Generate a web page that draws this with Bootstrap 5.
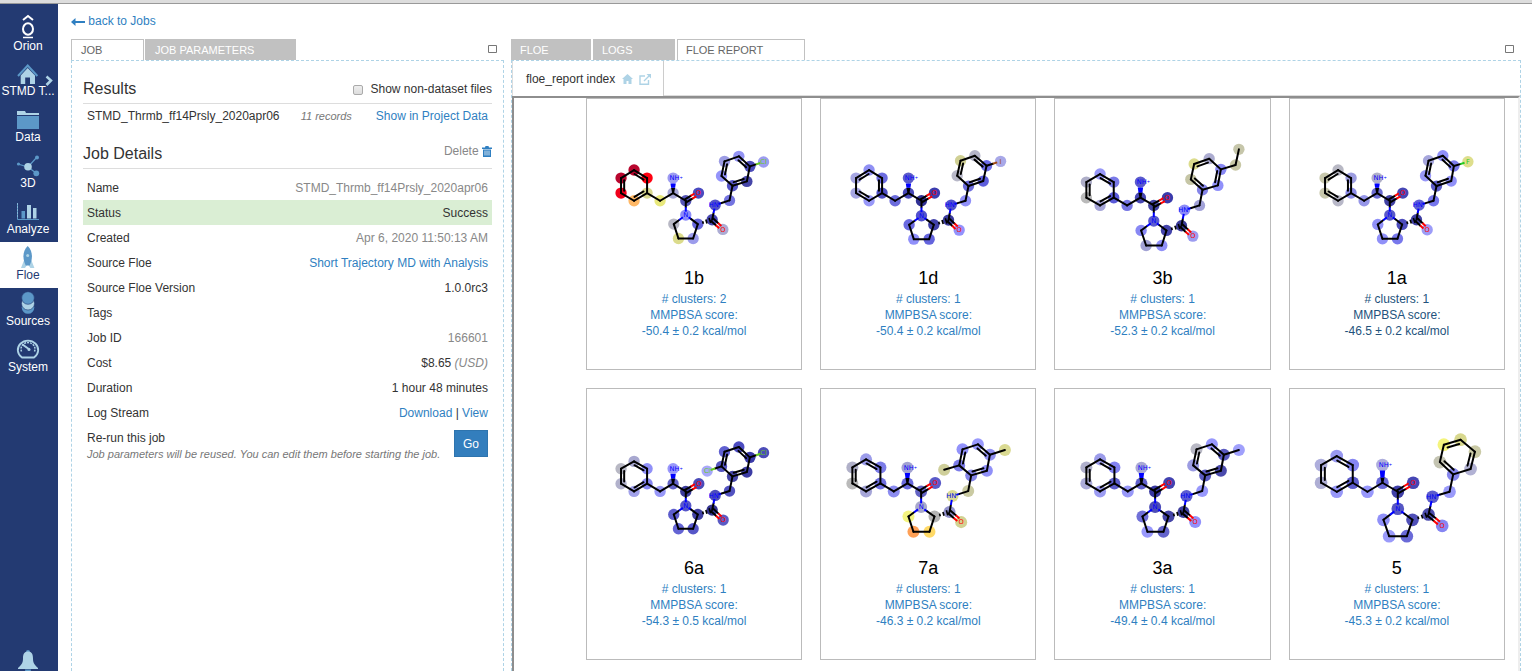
<!DOCTYPE html>
<html lang="en">
<head>
<meta charset="utf-8">
<meta name="viewport" content="width=device-width, initial-scale=1">
<title>Orion – Floe job</title>
<link href="https://cdn.jsdelivr.net/npm/bootstrap@5.3.0/dist/css/bootstrap.min.css" rel="stylesheet">
<style>
  :root { --navy:#233a72; --sky:#aed3e6; --steel:#5c98c8; --azure:#2f7fc1; --tab:#c1c1c1; }
  body { font-family:"Liberation Sans",Arial,sans-serif; font-size:12px; line-height:16px; color:#333; background:#fff; }
  a { color:var(--azure); text-decoration:none; }
  .window-edge { height:4px; background:#ddd; border-bottom:1px solid #999; }
  .side { width:58px; background:var(--navy); }
  .side a { display:block; height:46px; padding-top:2px; color:#fff; text-align:center; line-height:14px; white-space:nowrap; }
  .side a.brand { height:54px; padding-top:11px; }
  .side a.current { background:#fff; color:var(--navy); }
  .side a.alerts { height:21px; padding:0; }
  .side svg { display:block; width:58px; height:24px; overflow:visible; }
  .side span { display:block; padding-right:2px; }
  .workspace { padding:0 11px 0 13px; }
  .backlink { height:35px; padding-top:9px; }
  .panes { gap:7px; }
  .pane-job { flex:3 1 0; }
  .pane-report { flex:7 1 0; }
  .tabs { height:21px; gap:2px; }
  .pane-job .tabs { gap:1px; }
  .tabs button { border:1px solid var(--tab); border-bottom:0; background:var(--tab); color:#fff; font-size:11px; line-height:19px; padding:0 9px; text-align:left; }
  .pane-report .tabs button { padding:0 8px; }
  .tabs button.on { background:#fff; color:#666; }
  .tabs .maxi, .pane-report .tabs .maxi { border:0; background:none; padding:0; width:9px; height:9px; margin-right:7px; line-height:0; }
  .w-job { width:73px; } .w-param { width:151px; } .w-floe { width:80px; } .w-logs { width:82px; } .w-report { width:128px; }
  .frame { border:1px dashed var(--sky); border-bottom:0; }
  .frame-job { padding:14px 11px 0; }
  h2 { font-size:16px; line-height:28px; font-weight:400; margin:0; color:#333; }
  .rule { border-bottom:1px solid #ddd; }
  .showfiles { color:#333; }
  .showfiles input { appearance:none; width:10px; height:10px; border:1px solid #aaa; border-radius:2px; background:linear-gradient(#eee,#ddd); margin:2px 8px 0 0; }
  .dim { color:#888; }
  .remove { padding-top:3px; }
  .facts { width:100%; margin-top:6px; }
  .facts th { font-weight:400; padding:0 4px; height:25px; }
  .facts td { text-align:right; padding:0 4px; height:25px; }
  .facts .ok { background:#daeed4; }
  .rerun { padding:5px 4px 0; }
  .note { color:#777; font-size:11px; font-style:italic; }
  .btn-go { --bs-btn-color:#fff; --bs-btn-bg:#337ebd; --bs-btn-border-color:#2e74ae; --bs-btn-hover-color:#fff; --bs-btn-hover-bg:#2a6ca5; width:34px; height:27px; padding:0; font-size:12px; border-radius:0; }
  .subtabs { height:35px; }
  .subtab { width:152px; padding:0 12px 0 13px; border-left:1px solid #ddd; border-right:1px solid #ccc; }
  .subrest { border-bottom:1px solid #ddd; }
  .report { border-left:2px solid #8e8e8e; border-top:2px solid #8e8e8e; border-right:2px solid #eee; padding:0 13px 0 72px; }
  .mols { display:grid; grid-template-columns:repeat(4,1fr); gap:18px; }
  .mol { display:block; height:272px; border:1px solid #bbb; padding-top:36px; text-align:center; color:var(--azure); }
  .mol:hover, .mol.hot { color:#23527c; }
  .mol svg { display:block; width:100%; aspect-ratio:214/120; margin-bottom:12px; }
  .mol h3 { font-size:18px; line-height:22px; margin:0 0 2px; color:#000; font-weight:400; }
  .mol svg text { font-family:"DejaVu Sans",sans-serif; text-anchor:middle; }
</style>
</head>
<body>
<div class="vh-100 d-flex flex-column overflow-hidden">
  <div class="window-edge flex-shrink-0"></div>
  <div class="d-flex flex-grow-1" style="min-height:0">
    <nav class="side d-flex flex-column flex-shrink-0" aria-label="Main">
      <a class="brand" href="#"><svg viewBox="0 0 58 24" fill="none" stroke="#fff" stroke-width="2"><path d="M23 5l5-4 5 4" /><ellipse cx="28" cy="14" rx="5" ry="5.7"/><path d="M23 22.500h10" stroke-width="1.500"/></svg><span>Orion</span></a>
      <a href="#"><svg viewBox="0 0 58 24"><path d="M18 16L27.700 5.500 37.400 16" fill="none" stroke="#5c98c8" stroke-width="2"/><path d="M20.700 15.500L27.700 8l7.300 7.500V24h-5v-6.500h-4.800V24h-4.500z" fill="#aed3e6"/><path d="M46.500 16.500l4.500 4-4.500 4.500" fill="none" stroke="#aed3e6" stroke-width="2.500"/></svg><span>STMD T...</span></a>
      <a href="#"><svg viewBox="0 0 58 24"><path d="M17 5h8l1 2h13v2H17z" fill="#aed3e6"/><path d="M17 10h22v13H17z" fill="#5c98c8"/></svg><span>Data</span></a>
      <a href="#"><svg viewBox="0 0 58 24"><path d="M18 12l10 3 9-10M28 15l8 6" stroke="#5c98c8" stroke-width="1.200" fill="none"/><g fill="#5c98c8"><circle cx="18.500" cy="12" r="1.600"/><circle cx="37" cy="5.500" r="2"/><circle cx="36.300" cy="21.300" r="2.900"/></g><circle cx="28" cy="14.700" r="3.800" fill="#aed3e6"/></svg><span>3D</span></a>
      <a href="#"><svg viewBox="0 0 58 24"><path d="M17.500 5v16.500H39" fill="none" stroke="#5c98c8"/><path d="M17 6h1m-1 3h1m-1 3h1m-1 3h1m-1 3h1" stroke="#aed3e6"/><path d="M21.500 13H25v7.500h-3.500z" fill="#5c98c8"/><path d="M27 7h4v13.500h-4z" fill="#aed3e6"/><path d="M33 10h3.500v10.500H33z" fill="#aed3e6"/></svg><span>Analyze</span></a>
      <a href="#" class="current" aria-current="page"><svg viewBox="0 0 58 24"><path d="M24.500 15l-3.500 9h4l2.700-4 2.700 4h4l-3.500-9z" fill="#aed3e6"/><path d="M27.700 2c6 6 4.600 14 2 19.500h-4C23 16 21.700 8 27.700 2z" fill="#5c98c8"/><circle cx="27.700" cy="11.500" r="1.500" fill="#aed3e6"/></svg><span>Floe</span></a>
      <a href="#"><svg viewBox="0 0 58 24"><circle cx="28" cy="17.500" r="6.300" fill="#5c98c8"/><circle cx="28" cy="13.500" r="6.500" fill="#aed3e6" stroke="#233a72" stroke-width=".6"/><circle cx="28" cy="8" r="6.300" fill="#5c98c8" stroke="#233a72" stroke-width=".6"/></svg><span>Sources</span></a>
      <a href="#"><svg viewBox="0 0 58 24" fill="none" stroke="#aed3e6"><path d="M22 21.500a10.200 9.300 0 1 1 12 0z" stroke-width="1.800"/><path d="M21.500 15.500a7 6.500 0 1 1 13 0" stroke-width="1.500" stroke-dasharray="2 1"/><path d="M22.500 8.500l7 5" stroke-width="2"/><circle cx="29" cy="13.500" r="1.500" fill="#aed3e6" stroke="none"/></svg><span>System</span></a>
      <a class="alerts mt-auto" href="#" aria-label="Notifications"><svg viewBox="0 0 58 24"><circle cx="28" cy="2" r="2" fill="#5c98c8"/><path d="M28 1.500c4 0 5 3 5 7 0 5 2 6.500 5 9.500v1H18v-1c3-3 5-4.500 5-9.500 0-4 1-7 5-7z" fill="#aed3e6"/><path d="M25 19.500h6a3 3 0 0 1-6 0z" fill="#5c98c8"/></svg></a>
    </nav>

    <main class="workspace flex-grow-1 d-flex flex-column" style="min-width:0">
      <div class="backlink flex-shrink-0"><a href="#"><svg width="14" height="8" viewBox="0 0 14 8" fill="#2f7fc1"><path d="M0 4l4.500-4v3H14v2H4.500v3z"/></svg> back to Jobs</a></div>
      <div class="panes d-flex flex-grow-1" style="min-height:0">

        <section class="pane-job d-flex flex-column">
          <div class="tabs d-flex flex-shrink-0">
            <button class="on w-job" type="button">JOB</button>
            <button class="w-param" type="button">JOB PARAMETERS</button>
            <button class="maxi ms-auto align-self-center" type="button" aria-label="Maximize"><svg width="9" height="9"><path d="M.5 .5h8v7h-8z" fill="none" stroke="#777"/></svg></button>
          </div>
          <div class="frame frame-job flex-grow-1">
            <div class="d-flex justify-content-between rule">
              <h2>Results</h2>
              <label class="showfiles d-flex align-items-center"><input type="checkbox">Show non-dataset files</label>
            </div>
            <div class="d-flex px-1 pt-1 pb-3">
              <span>STMD_Thrmb_ff14Prsly_2020apr06</span>
              <em class="dim ms-auto note pe-4">11 records</em>
              <a href="#">Show in Project Data</a>
            </div>
            <div class="d-flex justify-content-between rule">
              <h2>Job Details</h2>
              <a class="dim remove" href="#">Delete <svg width="10" height="11" viewBox="0 0 10 11"><path d="M0 1.500h3L3.500 0h3L7 1.500h3V3H0z" fill="#2f7fc1"/><path d="M1 3.500h8V11H1z" fill="#2f7fc1"/><path d="M3 4.500v5M5 4.500v5M7 4.500v5" stroke="#fff" stroke-width=".8"/></svg></a>
            </div>
            <table class="facts">
              <tr><th scope="row">Name</th><td class="dim">STMD_Thrmb_ff14Prsly_2020apr06</td></tr>
              <tr class="ok"><th scope="row">Status</th><td>Success</td></tr>
              <tr><th scope="row">Created</th><td class="dim">Apr 6, 2020 11:50:13 AM</td></tr>
              <tr><th scope="row">Source Floe</th><td><a href="#">Short Trajectory MD with Analysis</a></td></tr>
              <tr><th scope="row">Source Floe Version</th><td>1.0.0rc3</td></tr>
              <tr><th scope="row">Tags</th><td></td></tr>
              <tr><th scope="row">Job ID</th><td class="dim">166601</td></tr>
              <tr><th scope="row">Cost</th><td>$8.65 <em class="dim">(USD)</em></td></tr>
              <tr><th scope="row">Duration</th><td>1 hour 48 minutes</td></tr>
              <tr><th scope="row">Log Stream</th><td><a href="#">Download</a> | <a href="#">View</a></td></tr>
            </table>
            <div class="rerun d-flex justify-content-between">
              <div><div>Re-run this job</div><div class="note text-nowrap">Job parameters will be reused. You can edit them before starting the job.</div></div>
              <button class="btn btn-go" type="button">Go</button>
            </div>
          </div>
        </section>

        <section class="pane-report d-flex flex-column">
          <div class="tabs d-flex flex-shrink-0">
            <button class="w-floe" type="button">FLOE</button>
            <button class="w-logs" type="button">LOGS</button>
            <button class="on w-report" type="button">FLOE REPORT</button>
            <button class="maxi ms-auto align-self-center" type="button" aria-label="Maximize"><svg width="9" height="9"><path d="M.5 .5h8v7h-8z" fill="none" stroke="#777"/></svg></button>
          </div>
          <div class="frame flex-grow-1 d-flex flex-column" style="min-height:0">
            <div class="subtabs d-flex flex-shrink-0">
              <div class="subtab d-flex align-items-center justify-content-between">floe_report index
                <a href="#" aria-label="Report home"><svg width="11" height="10" viewBox="0 0 11 10"><path d="M5.500 0L11 5H9.500v5h-3V7h-2v3h-3V5H0z" fill="#aed3e6"/></svg></a>
                <a href="#" aria-label="Open in new window"><svg width="12" height="11" viewBox="0 0 12 11" fill="none" stroke="#aed3e6" stroke-width="1.400"><path d="M6 2H1v8.300h8.500V6M5 7l5-5"/><path d="M7.500 0H12v4.500z" fill="#aed3e6" stroke="none"/></svg></a>
              </div>
              <div class="subrest flex-grow-1"></div>
            </div>
            <div class="report flex-grow-1 overflow-hidden"><div class="mols" id="mols"></div></div>
          </div>
        </section>
      </div>
    </main>
  </div>
</div>

<script src="https://cdn.jsdelivr.net/npm/bootstrap@5.3.0/dist/js/bootstrap.bundle.min.js"></script>
<script>
// Atom order: phenyl 0-5, CH2 6, CH 7, NH+ 8, C=O 9, O 10, ring N 11, pyrrolidine 12-15,
// amide C 16, O 17, NH 18, CH2 19, aryl 20-25, then substituents.
const xyA = [[126,103],[169,127],[169,175],[126,199],[85,175],[85,127],[209,199],[250,175],[250,128],[291,199],[333,174],[291,246],[331,274],[316,320],[268,320],[253,274],[376,261],[411,291],[385,213],[432,198],[441,151],[405,121],[415,73],[461,58],[497,89],[488,137],[542,75]];
const mols = [
 {name:'1b', n:2, score:'-50.4 ± 0.2', r:17, a:0, b:0, sub:[[24,26,'Cl','#66cc22']],
  xy:[[132,105],[171,129],[171,174],[132,197],[93,174],[93,129],[210,197],[249,174],[249,129],[287,197],[325,174],[287,240],[323,267],[309,310],[265,310],[251,267],[366,254],[398,283],[375,210],[418,196],[427,152],[394,123],[403,79],[446,64],[479,94],[470,139],[520,81]],
  c:'b8062e ff0010 d8d890 ffb866 f0001c b8062e e8e87c a8a8d8 9c9cf0 5656b8 4a4ac0 8c8cf8 6464dc 9c9cec dcdc8c b8b8c4 4646b0 acacd4 5252c8 7474e0 5656c8 9494fa 9c9ce4 9494f4 4c4cb8 4646a8 9c9cf0'},
 {name:'1d', n:1, score:'-50.4 ± 0.2', r:17, a:1, b:0, sub:[[24,26,'I','#a04a10']],
  xy:[[135,105],[174,129],[174,174],[135,197],[96,174],[96,129],[213,197],[253,174],[253,129],[292,197],[331,174],[292,242],[329,269],[315,312],[269,312],[255,269],[373,255],[405,285],[381,210],[424,197],[433,153],[399,122],[409,77],[452,62],[487,92],[477,138],[529,79]],
  c:'9090f4 6c6ce0 5050c4 9898f8 a6a6e2 a6a6e2 6c6cdc 4a4ab8 5c5cc8 303094 3c3cae 5252cc 4040a8 6464dd 9090fa 6a6ae0 3c3c9c 9292fc 5252cc 9090f8 6c6cdc b8b8c8 d0d094 b4b4c8 6c6ce8 5e5edc a8a8e8'},
 {name:'3b', n:1, score:'-52.3 ± 0.2', r:17, a:0, b:1, sub:[[24,26],[26,27]],
  xy:[[126,117],[167,141],[167,188],[126,211],[85,188],[85,141],[207,211],[247,188],[247,141],[287,211],[328,188],[287,258],[325,286],[311,331],[264,331],[249,286],[370,272],[404,303],[379,225],[424,211],[433,164],[398,133],[408,87],[453,71],[488,103],[479,151],[532,90],[542,43]],
  c:'9898f8 7a7ae8 5a5ad8 a6a6d8 bababa aeaec8 7676e4 4848b4 5a5acc 4444a4 3a3aac 5a5ad0 4444ac 9090f8 a2a2d4 8888f4 3a3a98 9c9cf0 8c8cf8 a2a2d8 8585e8 c6c6a6 dcdc8c acacd0 8888f4 9090fa c8c8a6 c6c6aa'},
 {name:'1a', n:1, score:'-46.5 ± 0.2', r:17, a:1, b:0, hot:true, sub:[[24,26,'F','#22cc22']],
  xy:[[135,105],[174,129],[174,174],[135,197],[96,174],[96,129],[213,197],[252,174],[252,129],[290,197],[329,174],[290,240],[327,268],[313,311],[268,311],[254,268],[370,254],[402,284],[378,210],[421,197],[430,153],[397,122],[406,77],[449,62],[482,93],[474,138],[524,80]],
  c:'b8b8c4 9c9ce0 8c8ce8 b8b8c8 c8c8ac c8c8ac 9696e8 6c6cd0 b0b0c8 4242a4 4646b4 5a5ac8 4c4cbc 7878ec 9090f8 9090f8 4040a4 9c9cf8 6060d4 7676ec 5c5cc8 9898f8 a6a6dc 9090fa 7c7cec 9090f8 dede8c'},
 {name:'6a', n:1, score:'-54.3 ± 0.5', r:17, a:0, b:0, sub:[[24,26,'Cl','#66cc22'],[21,27,'Cl','#66cc22']],
  xy:[[132,109],[171,131],[171,176],[132,199],[93,176],[93,131],[210,199],[249,176],[249,131],[287,199],[326,176],[287,242],[323,268],[309,311],[265,311],[251,268],[366,255],[399,285],[375,211],[418,198],[427,154],[394,124],[403,80],[446,66],[479,97],[470,141],[520,83],[351,138]],
  c:'a8a8d0 9090f8 8686f2 a2a2ea b2b2cc b8b8c4 9898f8 6464c8 9898fa 3c3c9c 4a4ab8 5656c8 4040a4 5656c8 6464d4 5c5ccc 343490 5a5ac4 4c4cbc 5252c0 4646a8 5656c0 6060d0 4c4cc0 3a3aa8 3c3ca4 4c4cb8 a8a8fa'},
 {name:'7a', n:1, score:'-46.3 ± 0.2', r:18, a:0, b:0, sub:[[24,26],[21,27]], xy:[...xyA,[360,134]],
  c:'9c9cea 7c7ce8 7070e0 a6a6d8 bababa b0b0c8 8c8cf0 6a6adc a2a2d2 6464c4 5a5ac8 a8a8cc b4b4b4 ffd966 ffa056 f4f480 9292cc d2d292 dcdc92 cacaa2 8585e8 7c7ce8 9292fa 9a9afc 9292f2 9090f8 dada92 cfcf9a'},
 {name:'3a', n:1, score:'-49.4 ± 0.4', r:18, a:0, b:0, sub:[[24,26]], xy:xyA,
  c:'9c9cea 8282f2 5e5ecc 9c9cf2 ababd8 b0b0cc 9898f8 6060cc a8a8d4 3838a0 4242b0 4c4cb8 4646a8 6464cc 9898fc 7070d8 4040a0 9292fc 5c5cd0 9898fc 5a5ac0 9c9ce2 b8b8c4 9898fc 5a5ac0 4a4aac a0a0fc'},
 {name:'5', n:1, score:'-45.3 ± 0.2', r:19, a:0, b:1, sub:[],
  xy:[[131,93],[179,120],[179,173],[131,200],[84,173],[84,120],[223,200],[268,173],[268,120],[314,200],[360,173],[314,251],[358,284],[341,333],[288,333],[271,284],[406,268],[447,302],[418,215],[469,200],[480,148],[440,111],[452,59],[502,44],[545,80],[532,132]],
  c:'9898f0 8686f2 5c5ccc 9898f8 aeaed4 aeaedc 9898fc 6a6ad8 aeaedc 4040a8 4646b4 5656c4 5050b8 6a6ad8 9a9afa 9090f8 4c4cac 8686f2 5c5ccc 9a9afa 8686ee c4c4b2 f4f47c d8d88e cacaa6 b2b2d4'}
];
const BLUE = '#0000ff', RED = '#ff0000';

function drawMol(m) {
  const P = m.xy, label = {8:BLUE, 10:RED, 11:BLUE, 17:RED, 18:BLUE};
  m.sub.forEach(s => { if (s[2]) label[s[1]] = s[3]; });
  let out = m.c.split(' ').map((c, i) => `<circle cx="${P[i][0]}" cy="${P[i][1]}" r="${m.r}" fill="#${c}"/>`).join('');
  const seg = (a, b, col, w = 6) => `<path d="M${a[0]} ${a[1]}L${b[0]} ${b[1]}" stroke="${col}" stroke-width="${w}" stroke-linecap="${col === '#000' ? 'round' : 'butt'}"/>`;
  const mix = (a, b, t) => [a[0] + (b[0]-a[0])*t, a[1] + (b[1]-a[1])*t];
  const line = (a, b, ca, cb, ta = 0, tb = 1) => {
    if (ca === cb) return seg(mix(a,b,ta), mix(a,b,tb), ca);
    return seg(mix(a,b,ta), mix(a,b,.45), ca) + seg(mix(a,b,.45), mix(a,b,tb), cb);
  };
  const bond = (i, j) => line(P[i], P[j], label[i] || '#000', label[j] || '#000', label[i] ? .24 : 0, label[j] ? .76 : 1);
  const twin = (i, j) => {
    const [a, b] = [P[i], P[j]], L = Math.hypot(b[0]-a[0], b[1]-a[1]);
    const n = [-(b[1]-a[1])/L*5, (b[0]-a[0])/L*5];
    return [1,-1].map(s => line([a[0]+n[0]*s, a[1]+n[1]*s], [b[0]+n[0]*s, b[1]+n[1]*s], '#000', RED, 0, .76)).join('');
  };
  const ring = (s, odd) => {
    let r = '', cx = 0, cy = 0;
    for (let k = 0; k < 6; k++) { cx += P[s+k][0]/6; cy += P[s+k][1]/6; }
    for (let k = 0; k < 6; k++) {
      const i = s+k, j = s+(k+1)%6;
      r += bond(i, j);
      if (k % 2 === odd) {
        const a = mix(P[i], [cx,cy], .24), b = mix(P[j], [cx,cy], .24);
        r += seg(mix(a,b,.04), mix(a,b,.96), '#000');
      }
    }
    return r;
  };
  out += ring(0, m.a ? 1 : 0) + ring(20, m.b ? 0 : 1);
  [[2,6],[6,7],[7,9],[9,11],[11,12],[12,13],[13,14],[14,15],[15,11],[16,18],[18,19],[19,20]].forEach(e => out += bond(...e));
  out += twin(9,10) + twin(16,17);
  m.sub.forEach(s => out += bond(s[0], s[1]));
  // solid wedge to the ammonium, hashed wedge to the amide carbon
  const [x, y] = P[7], top = P[8][1] + 16, mid = y - 16;
  out += `<path d="M${x-6} ${mid}h12L${x+3} ${y}h-6z" fill="#000"/><path d="M${x-8} ${top}h16l-2 ${mid-top}h-12z" fill="${BLUE}"/>`;
  const d = [P[16][0]-P[12][0], P[16][1]-P[12][1]], L = Math.hypot(...d);
  [.36,.6,.84].forEach((t, k) => {
    const p = mix(P[12], P[16], t), h = 4 + k*2, n = [-d[1]/L*h, d[0]/L*h];
    out += `<path d="M${p[0]-n[0]} ${p[1]-n[1]}L${p[0]+n[0]} ${p[1]+n[1]}" stroke="#000" stroke-width="5"/>`;
  });
  const t = (i, s, col, dx = 0) => `<text x="${P[i][0]+dx}" y="${P[i][1]+7}" font-size="20" fill="${col}">${s}</text>`;
  out += t(8, 'NH<tspan font-size="12" dy="-4">+</tspan>', BLUE, 9) + t(10,'O',RED) + t(11,'N',BLUE) + t(17,'O',RED) + t(18,'HN',BLUE,-4);
  m.sub.forEach(s => { if (s[2]) out += t(s[1], s[2], s[3]); });
  return `<svg viewBox="-9 0 642 360" fill="none" role="img" aria-label="Structure of ${m.name}">${out}</svg>`;
}

document.getElementById('mols').innerHTML = mols.map(m =>
  `<a class="mol${m.hot ? ' hot' : ''}" href="#">${drawMol(m)}<h3>${m.name}</h3># clusters: ${m.n}<br>MMPBSA score:<br>${m.score} kcal/mol</a>`).join('');
</script>
</body>
</html>
